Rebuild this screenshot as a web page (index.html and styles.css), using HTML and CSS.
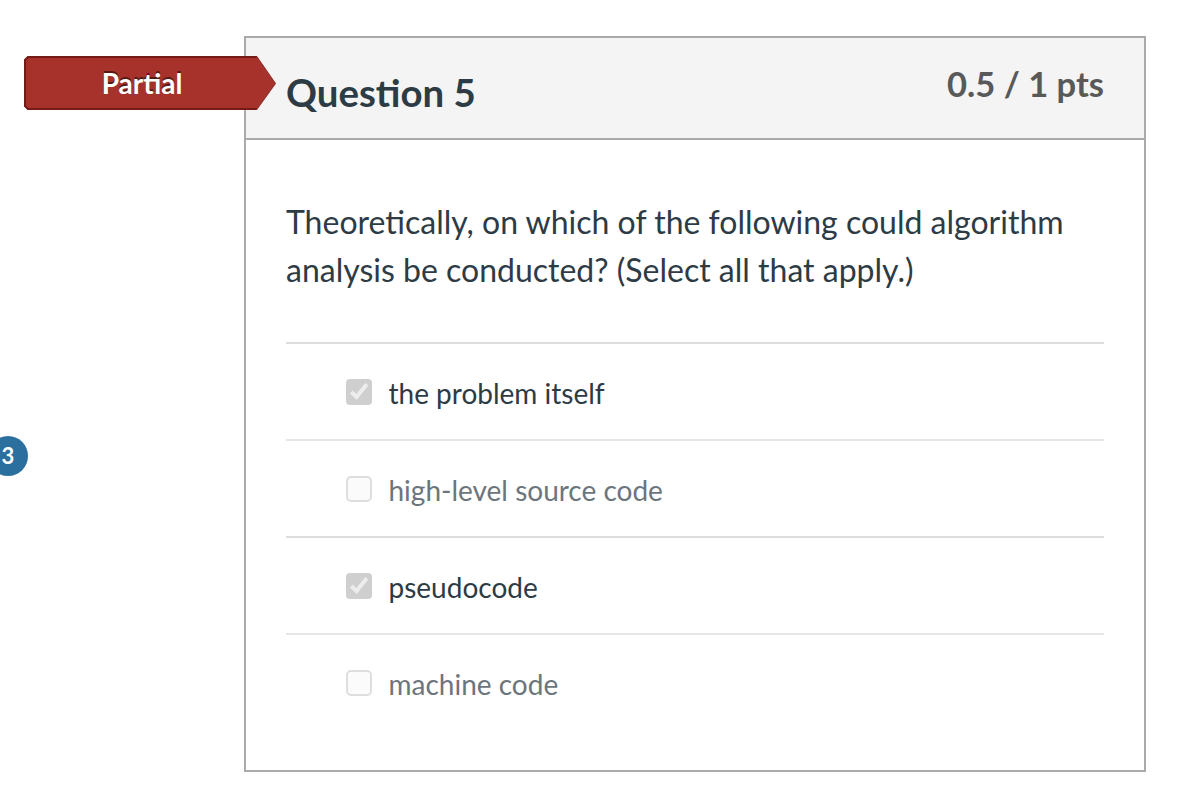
FILE: index.html
```html
<!DOCTYPE html>
<html lang="en">
<head>
  <meta charset="UTF-8" />
  <title>Quiz Results</title>
  <link rel="stylesheet" href="styles.css">
</head>
<body>
  <div class="question">
    <div class="header">
      <h2 class="name">Question 5</h2>
      <div class="points">0.5 / 1 pts</div>
    </div>
    <div class="text">
      <p class="prompt">Theoretically, on which of the following could algorithm analysis be conducted? (Select all that apply.)</p>
      <div class="answers">
        <div class="answer selected">
          <span class="box"><svg viewBox="0 0 26 26"><path d="M5.3 13L10.5 18L20.8 5.3" /></svg></span>
          <span class="label">the problem itself</span>
        </div>
        <div class="answer">
          <span class="box"></span>
          <span class="label">high-level source code</span>
        </div>
        <div class="answer selected">
          <span class="box"><svg viewBox="0 0 26 26"><path d="M5.3 13L10.5 18L20.8 5.3" /></svg></span>
          <span class="label">pseudocode</span>
        </div>
        <div class="answer">
          <span class="box"></span>
          <span class="label">machine code</span>
        </div>
      </div>
    </div>
    <div class="flag">
      <svg viewBox="0 0 252 54">
        <path class="shape" d="M4 0H233L252 27.5L233 54H4L0 50V4Z" />
        <path class="edge" d="M233 1H4L1 4V50L4 53H233" />
        <path class="tip" d="M232.500 0.500L251.300 27.500L232.500 53.500" />
      </svg>
      <span>Partial</span>
    </div>
  </div>
  <div class="badge">3</div>
</body>
</html>
```

FILE: styles.css
```css
* {
  box-sizing: border-box;
}
body {
  margin: 0;
  height: 802px;
  overflow: hidden;
  background: #fff;
  color: #2d3b45;
  font-family: Lato, sans-serif;
}
.question {
  position: relative;
  width: 902px;
  height: 736px;
  margin: 36px 0 0 244px;
  border: 2px solid #aaa;
}
.header {
  display: flex;
  justify-content: space-between;
  height: 102px;
  padding: 0 40px;
  background: #f4f4f4;
  border-bottom: 2px solid #aaa;
}
.name {
  margin: 30px 0 0;
  font-size: 38.4px;
  line-height: 48px;
}
.points {
  margin-top: 22px;
  color: #595959;
  font-size: 34.56px;
  font-weight: bold;
  line-height: 48px;
}
.text {
  padding: 58px 40px 0;
}
.prompt {
  margin: 0 0 48px;
  font-size: 32px;
  line-height: 48px;
}
.answer {
  display: flex;
  align-items: flex-start;
  gap: 16.5px;
  height: 97px;
  padding: 35px 0 0 60px;
  border-top: 2px solid #ddd;
  color: #6c757c;
}
.answer:nth-child(even) {
  border-top-color: #e6e6e6;
}
.answer.selected {
  color: #2d3b45;
}
.box {
  width: 26px;
  height: 26px;
  border: 2px solid #dedede;
  border-radius: 5px;
  background: #fbfbfb;
}
.selected .box {
  border: 0;
  border-radius: 4px;
  background: #cfcfcf;
}
.box svg {
  display: block;
}
.box path {
  fill: none;
  stroke: #ededed;
  stroke-width: 4;
}
.label {
  margin-top: -3px;
  font-size: 28px;
  line-height: 34px;
}
.flag {
  position: absolute;
  left: -222px;
  top: 18px;
  width: 252px;
  height: 54px;
}
.flag svg {
  display: block;
}
.shape {
  fill: #a6322b;
}
.edge {
  fill: none;
  stroke: #761b17;
  stroke-width: 2;
}
.tip {
  fill: none;
  stroke: #8a3a36;
  stroke-width: 1;
}
.flag span {
  position: absolute;
  left: 0;
  top: 10px;
  width: 236px;
  color: #fff;
  font-size: 28px;
  font-weight: bold;
  line-height: 34px;
  text-align: center;
  text-shadow: 0 -2px 0 rgba(0,0,0,0.5);
}
.badge {
  position: absolute;
  left: -12px;
  top: 436px;
  width: 40px;
  height: 40px;
  border-radius: 50%;
  background: #2b6f9f;
  color: #fff;
  font-size: 22px;
  font-weight: bold;
  line-height: 40px;
  text-align: center;
}
```
